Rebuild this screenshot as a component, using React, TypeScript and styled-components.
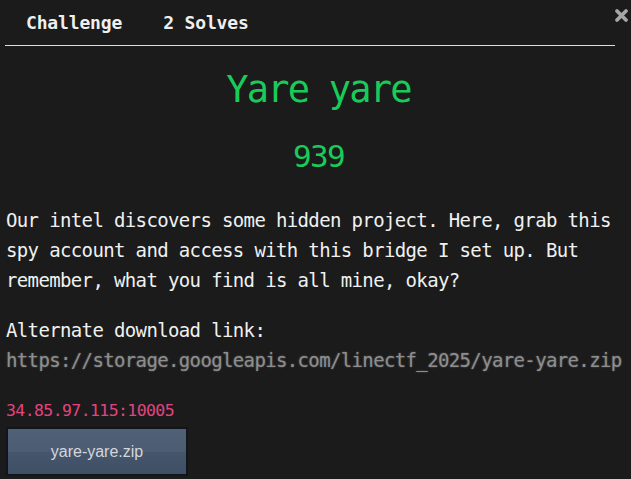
import styled, { createGlobalStyle } from "styled-components";

const mono = `"DejaVu Sans Mono", "Liberation Mono", monospace`;

const GlobalStyle = createGlobalStyle`
  html, body {
    margin: 0;
    padding: 0;
    background: #1b1b1b;
  }
  body {
    font-family: ${mono};
    color: #ececec;
  }
`;

const Modal = styled.div`
  position: relative;
  width: 631px;
  height: 479px;
  box-sizing: border-box;
  padding: 0 0 0 6px;
  overflow: hidden;
`;

const TabBar = styled.div`
  display: flex;
  align-items: center;
  height: 45px;
  margin: 0 16px 0 -1px;
  border-bottom: 1px solid #dedede;
`;

const Tab = styled.div`
  padding: 0 20px 0 21px;
  font-size: 18px;
  font-weight: bold;
  letter-spacing: -0.15px;
  color: #efefef;
`;

const Close = styled.button`
  position: absolute;
  top: 8px;
  right: 2px;
  width: 16px;
  height: 16px;
  padding: 0;
  border: 0;
  background: none;
  cursor: pointer;
`;

const Title = styled.h1`
  margin: 22px 0 0;
  text-align: center;
  font-family: ${mono};
  font-size: 37px;
  font-weight: normal;
  line-height: 44px;
  letter-spacing: -1.8px;
  color: #19cc5a;
`;

const Points = styled.h2`
  margin: 26px 0 0;
  text-align: center;
  font-family: ${mono};
  font-size: 31px;
  font-weight: normal;
  line-height: 36px;
  letter-spacing: -1.6px;
  color: #19cc5a;
`;

const Description = styled.div`
  margin-top: 31px;
  font-size: 19px;
  line-height: 30px;
  letter-spacing: -0.64px;
  color: #f0f0f0;
`;

const Para = styled.p<{ $gap?: number }>`
  margin: ${({ $gap }) => $gap ?? 0}px 0 0;
`;

const Link = styled.a`
  color: #8e8e8e;
  text-decoration: none;
  text-shadow: 0 0 2px rgba(140, 140, 140, 0.6);
`;

const Connection = styled.div`
  margin-top: 26px;
  font-size: 16.5px;
  line-height: 20px;
  letter-spacing: -0.6px;
  color: #e2447f;
`;

const FileButton = styled.button`
  display: block;
  margin-top: 6px;
  width: 182px;
  height: 49px;
  box-sizing: border-box;
  border: 2px solid #10161c;
  background: linear-gradient(
    to bottom,
    #506177 0%,
    #4c5c72 50%,
    #45556b 52%,
    #3f4f65 100%
  );
  font-family: "Liberation Sans", Arial, sans-serif;
  font-size: 16px;
  color: #d3d7dd;
  cursor: pointer;
`;

export default function App() {
  return (
    <>
      <GlobalStyle />
      <Modal>
        <TabBar>
          <Tab>Challenge</Tab>
          <Tab>2 Solves</Tab>
        </TabBar>
        <Close aria-label="close">
          <svg width="15" height="15" viewBox="0 0 15 15">
            <path
              d="M3 3 L12 12 M12 3 L3 12"
              stroke="#a6a6a6"
              strokeWidth="3.8"
              strokeLinecap="round"
            />
          </svg>
        </Close>
        <Title>Yare yare</Title>
        <Points>939</Points>
        <Description>
          <Para>
            Our intel discovers some hidden project. Here, grab this spy
            account and access with this bridge I set up. But remember, what
            you find is all mine, okay?
          </Para>
          <Para $gap={20}>
            Alternate download link:
            <br />
            <Link href="#">
              https://storage.googleapis.com/linectf_2025/yare-yare.zip
            </Link>
          </Para>
        </Description>
        <Connection>34.85.97.115:10005</Connection>
        <FileButton>yare-yare.zip</FileButton>
      </Modal>
    </>
  );
}
